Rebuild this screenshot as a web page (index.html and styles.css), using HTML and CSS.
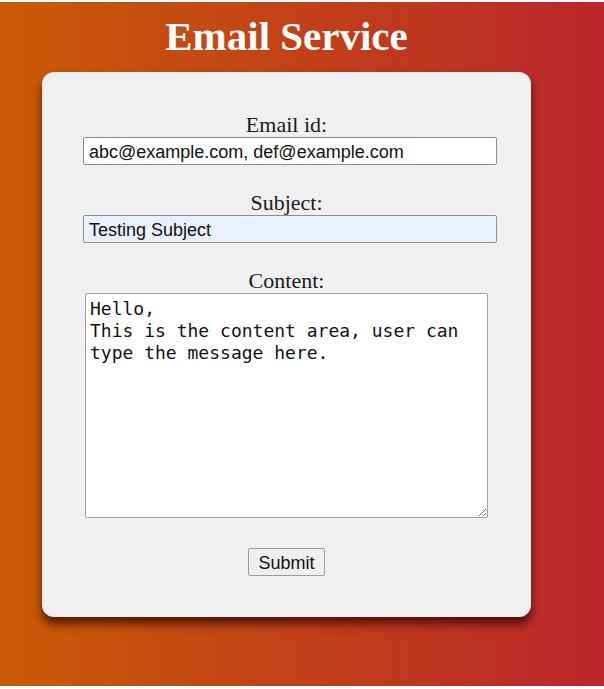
FILE: index.html
```html
<!DOCTYPE html>
<html>
<head>
<meta charset="utf-8">
<link rel="stylesheet" href="styles.css">
</head>
<body>
<div class="page">
  <h1 class="title">Email Service</h1>
  <form class="card">
    <label class="label" for="email">Email id:</label>
    <input class="field" id="email" type="text" value="abc@example.com, def@example.com">
    <label class="label gap" for="subject">Subject:</label>
    <input class="field autofill" id="subject" type="text" value="Testing Subject">
    <label class="label gap" for="content">Content:</label>
    <textarea class="content" id="content">Hello,
This is the content area, user can
type the message here.</textarea>
    <button class="submit" type="button">Submit</button>
  </form>
</div>
</body>
</html>
```
FILE: styles.css
```css
html, body {
  margin: 0;
  padding: 0;
  background: #ffffff;
}
.page {
  margin-top: 2px;
  height: 684px;
  box-sizing: border-box;
  padding-top: 10px;
  background: linear-gradient(to right, #c95b06, #ba262b);
  overflow: hidden;
}
.title {
  margin: 0;
  padding-right: 31px;
  text-align: center;
  font-family: "Liberation Serif", serif;
  font-weight: bold;
  font-size: 41px;
  line-height: 48px;
  color: #ffffff;
}
.card {
  margin: 12px 0 0 42px;
  width: 489px;
  height: 545px;
  box-sizing: border-box;
  padding-top: 40px;
  background: #f0f0f0;
  border-radius: 12px;
  box-shadow: 0 7px 10px rgba(40, 0, 0, 0.7);
  display: flex;
  flex-direction: column;
}
.label {
  display: block;
  text-align: center;
  font-family: "Liberation Serif", serif;
  font-size: 22px;
  line-height: 25px;
  color: #1a1a1a;
}
.label.gap {
  margin-top: 25px;
}
.field {
  margin: 0 34px 0 41px;
  height: 28px;
  box-sizing: border-box;
  padding: 2px 5px 0;
  border: 1px solid #8d8d8d;
  border-radius: 2px;
  background: #ffffff;
  font-family: "Liberation Sans", sans-serif;
  font-size: 18px;
  color: #111111;
  outline: none;
}
.field.autofill {
  background: #e8f0fe;
}
.content {
  align-self: center;
  width: 403px;
  height: 225px;
  box-sizing: border-box;
  margin: 0;
  padding: 4px;
  border: 1px solid #a3a3a3;
  border-radius: 2px;
  background: #ffffff;
  font-family: "DejaVu Sans Mono", monospace;
  font-size: 18px;
  line-height: 22px;
  color: #111111;
  outline: none;
}
.submit {
  align-self: center;
  margin-top: 30px;
  width: 77px;
  height: 28px;
  padding: 2px 0 0;
  border: 1px solid #9a9a9a;
  border-radius: 2px;
  background: #efefef;
  font-family: "Liberation Sans", sans-serif;
  font-size: 18px;
  color: #111111;
}
```
